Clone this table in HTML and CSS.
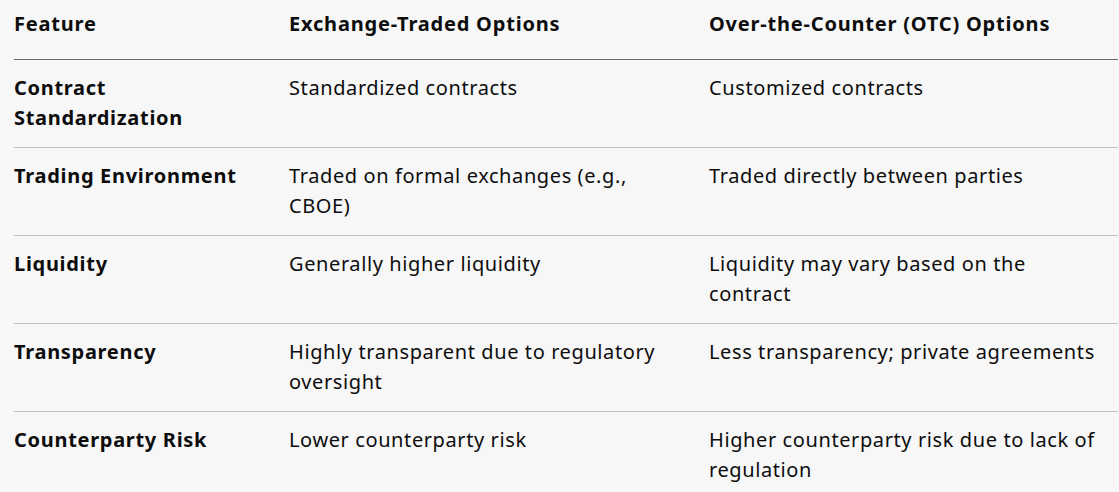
FILE: index.html
```html
<!DOCTYPE html>
<html lang="en">
<head>
<meta charset="utf-8">
<title>Exchange-Traded vs OTC Options</title>
<link rel="stylesheet" href="styles.css">
</head>
<body>
<table class="cmp">
  <colgroup>
    <col class="c1">
    <col class="c2">
    <col class="c3">
  </colgroup>
  <thead>
    <tr>
      <th>Feature</th>
      <th>Exchange-Traded Options</th>
      <th>Over-the-Counter (OTC) Options</th>
    </tr>
  </thead>
  <tbody>
    <tr>
      <td><strong>Contract Standardization</strong></td>
      <td>Standardized contracts</td>
      <td>Customized contracts</td>
    </tr>
    <tr>
      <td><strong>Trading Environment</strong></td>
      <td>Traded on formal exchanges (e.g., CBOE)</td>
      <td>Traded directly between parties</td>
    </tr>
    <tr>
      <td><strong>Liquidity</strong></td>
      <td>Generally higher liquidity</td>
      <td>Liquidity may vary based on the contract</td>
    </tr>
    <tr>
      <td><strong>Transparency</strong></td>
      <td>Highly transparent due to regulatory oversight</td>
      <td>Less transparency; private agreements</td>
    </tr>
    <tr>
      <td><strong>Counterparty Risk</strong></td>
      <td>Lower counterparty risk</td>
      <td>Higher counterparty risk due to lack of regulation</td>
    </tr>
  </tbody>
</table>
</body>
</html>
```

FILE: styles.css
```css
html, body {
  margin: 0;
  padding: 0;
  overflow: hidden;
  background: #f7f7f8;
}

body {
  font-family: "Noto Sans", "Open Sans", sans-serif;
  font-size: 20px;
  line-height: 30px;
  letter-spacing: 0.6px;
  color: #0d0d0d;
}

.cmp {
  margin-left: 14px;
  width: 1104px;
  table-layout: fixed;
  border-collapse: collapse;
}

.c1 { width: 275px; }
.c2 { width: 420px; }
.c3 { width: 409px; }

.cmp th {
  text-align: left;
  font-weight: 700;
  letter-spacing: 0.8px;
  padding: 9px 40px 20px 0;
  border-bottom: 1px solid #676767;
  vertical-align: top;
}

.cmp td {
  padding: 13px 40px 14px 0;
  border-bottom: 1px solid #c3c3c3;
  vertical-align: top;
}

.cmp td:nth-child(2) { padding-right: 42px; }
.cmp td:nth-child(3) { padding-right: 12px; }

.cmp strong {
  font-weight: 700;
  letter-spacing: 0.7px;
}
```
